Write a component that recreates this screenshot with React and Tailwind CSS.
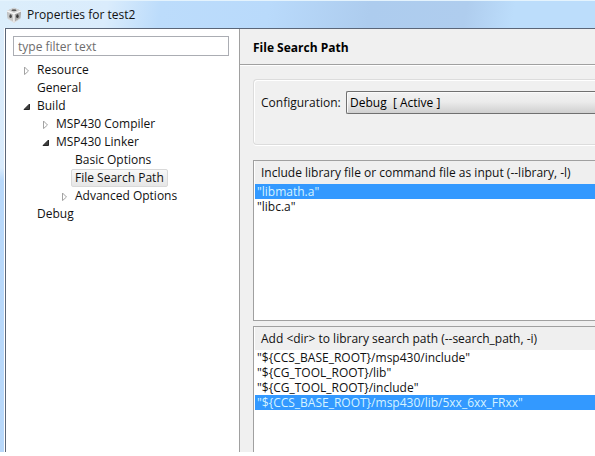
import React from "react";

const FONT = "font-['Open_Sans','Noto_Sans',sans-serif]";

function CubeIcon() {
  return (
    <svg viewBox="0 0 16 16" className="size-4 shrink-0" aria-hidden="true">
      <path d="M8 .8 15 3.8 14.2 11.6 8 15.4 1.8 11.6 1 3.8Z" fill="#a8a8a8" />
      <path d="M8 .8 15 3.8 8 6.8 1 3.8Z" fill="#d6d6d6" />
      <path d="M1 3.8 8 6.8V15.4L1.8 11.6Z" fill="#c6c6c6" />
      <path d="M15 3.8 8 6.8V15.4L14.2 11.6Z" fill="#a9a9a9" />
      <path d="M1 3.8 8 6.8 15 3.8M8 6.8V15.4" fill="none" stroke="#f8f8f8" strokeWidth="1.4" />
      <path d="M1.8 11.6 8 15.4 14.2 11.6" fill="none" stroke="#e2e2e2" strokeWidth=".8" />
      <ellipse cx="8" cy="3.2" rx="2.6" ry="1" fill="#5a5a5a" />
      <ellipse cx="4.6" cy="9.2" rx="1.2" ry="1.9" fill="#454545" />
      <ellipse cx="11.4" cy="9.2" rx="1.2" ry="1.9" fill="#383838" />
    </svg>
  );
}

function Arrow({ open }) {
  return (
    <svg viewBox="0 0 8 10" className="h-[10px] w-2" aria-hidden="true">
      {open ? (
        <path d="M6.5 3V8.5H1Z" fill="#404040" stroke="#262626" strokeWidth="1" />
      ) : (
        <path d="M1.5 2 5.5 6 1.5 9.6Z" fill="#fff" stroke="#a3a3a3" strokeWidth="1" />
      )}
    </svg>
  );
}

const TREE = [
  { label: "Resource", indent: "pl-[17px]", state: "closed" },
  { label: "General", indent: "pl-[17px]" },
  { label: "Build", indent: "pl-[17px]", state: "open" },
  { label: "MSP430 Compiler", indent: "pl-9", state: "closed" },
  { label: "MSP430 Linker", indent: "pl-9", state: "open" },
  { label: "Basic Options", indent: "pl-[55px]" },
  { label: "File Search Path", indent: "pl-[55px]", selected: true },
  { label: "Advanced Options", indent: "pl-[55px]", state: "closed" },
  { label: "Debug", indent: "pl-[17px]" },
];

function TreeRow({ label, indent, state, selected }) {
  return (
    <li className={`flex h-[18px] items-center ${indent}`}>
      <span className="flex w-[10px] shrink-0">{state && <Arrow open={state === "open"} />}</span>
      <button
        type="button"
        className={`h-[18px] rounded-xs border px-[3px] leading-4 whitespace-nowrap ${
          selected ? "border-[#d9d9d9] bg-linear-to-b from-[#f8f8f8] to-[#e6e6e6]" : "border-transparent"
        }`}
      >
        {label}
      </button>
    </li>
  );
}

function PathList({ title, items, selected, className }) {
  return (
    <section className={`flex flex-col border-l border-t border-[#a0a0a0] bg-white pl-px ${className}`}>
      <h2 className="flex h-[23px] shrink-0 items-center bg-[#efefef] pl-[6px] whitespace-nowrap">{title}</h2>
      <ul>
        {items.map((item) => (
          <li key={item}>
            <button
              type="button"
              className={`block h-[15px] w-full pl-[2px] text-left leading-[15px] whitespace-nowrap ${
                item === selected ? "bg-[#3399ff] text-[#d5f3ff]" : ""
              }`}
            >
              {item}
            </button>
          </li>
        ))}
      </ul>
    </section>
  );
}

export default function App() {
  return (
    <div className={`h-screen overflow-hidden bg-white pb-1 text-[12px] leading-4 text-[#111] ${FONT}`}>
      <div className="flex h-full flex-col bg-[#c3dffa]">
        <header className="flex h-7 shrink-0 items-center gap-[5px] border-t border-[#e4f3fd] bg-[linear-gradient(100deg,#dceefb_0%,#daecfc_18%,#bcdcfb_27%,#b9dafb_45%,#adccee_62%,#afcdee_78%,#bcddfb_86%,#bcddfb_100%)] pl-[6px]">
          <CubeIcon />
          <h1 className="whitespace-nowrap">Properties for test2</h1>
        </header>
        <div className="flex min-h-0 flex-1">
          <div className="w-[5px] shrink-0 border-r border-white bg-linear-to-b from-[#dcedfb] from-0% via-[#d9ebfc] via-33% to-[#b8d8fa] to-36%" />
          <div className="flex min-w-0 flex-1 border-l border-t border-[#5b6678] bg-[#f0f0f0]">
            <nav className="w-[233px] shrink-0 bg-white pt-[7px]" aria-label="Property pages">
              <input
                type="text"
                aria-label="Filter"
                placeholder="type filter text"
                className="ml-[7px] block h-5 w-[216px] border border-[#abadb3] bg-white px-1 leading-4 outline-none placeholder:text-[#6d6d6d]"
              />
              <ul className="mt-[5px]">
                {TREE.map((row) => (
                  <TreeRow key={row.label} {...row} />
                ))}
              </ul>
            </nav>
            <main className="flex min-w-0 flex-1 flex-col border-l border-[#a0a0a0]">
              <div className="flex h-9 shrink-0 items-center border-b border-[#a0a0a0] pl-[13px] pt-[3px]">
                <h2 className="font-bold text-black">File Search Path</h2>
              </div>
              <div className="flex min-h-0 flex-1 flex-col border-t border-white pl-[13px] pt-[13px]">
                <div className="flex h-[66px] shrink-0 items-start rounded-l-sm border-y border-l border-[#dcdcdc] pl-[7px] pt-[11px] shadow-[inset_1px_1px_0_#fff,0_1px_0_#fff]">
                  <label htmlFor="configuration" className="w-[85px] shrink-0 pt-1">
                    Configuration:
                  </label>
                  <select
                    id="configuration"
                    className="h-[23px] min-w-0 flex-1 appearance-none rounded-l-xs border-y border-l border-[#707070] bg-linear-to-b from-[#f2f2f2] from-0% via-[#ebebeb] via-48% to-[#cfcfcf] to-100% pl-[3px] leading-4 text-black shadow-[inset_1px_1px_0_#fafafa]"
                  >
                    <option>{"Debug\u00a0 [ Active ]"}</option>
                  </select>
                </div>
                <PathList
                  className="mt-[15px] h-[161px] shrink-0 border-b"
                  title="Include library file or command file as input (--library, -l)"
                  items={['"libmath.a"', '"libc.a"']}
                  selected={'"libmath.a"'}
                />
                <PathList
                  className="mt-[5px] min-h-0 flex-1"
                  title="Add <dir> to library search path (--search_path, -i)"
                  items={[
                    '"${CCS_BASE_ROOT}/msp430/include"',
                    '"${CG_TOOL_ROOT}/lib"',
                    '"${CG_TOOL_ROOT}/include"',
                    '"${CCS_BASE_ROOT}/msp430/lib/5xx_6xx_FRxx"',
                  ]}
                  selected={'"${CCS_BASE_ROOT}/msp430/lib/5xx_6xx_FRxx"'}
                />
              </div>
            </main>
          </div>
        </div>
      </div>
    </div>
  );
}
